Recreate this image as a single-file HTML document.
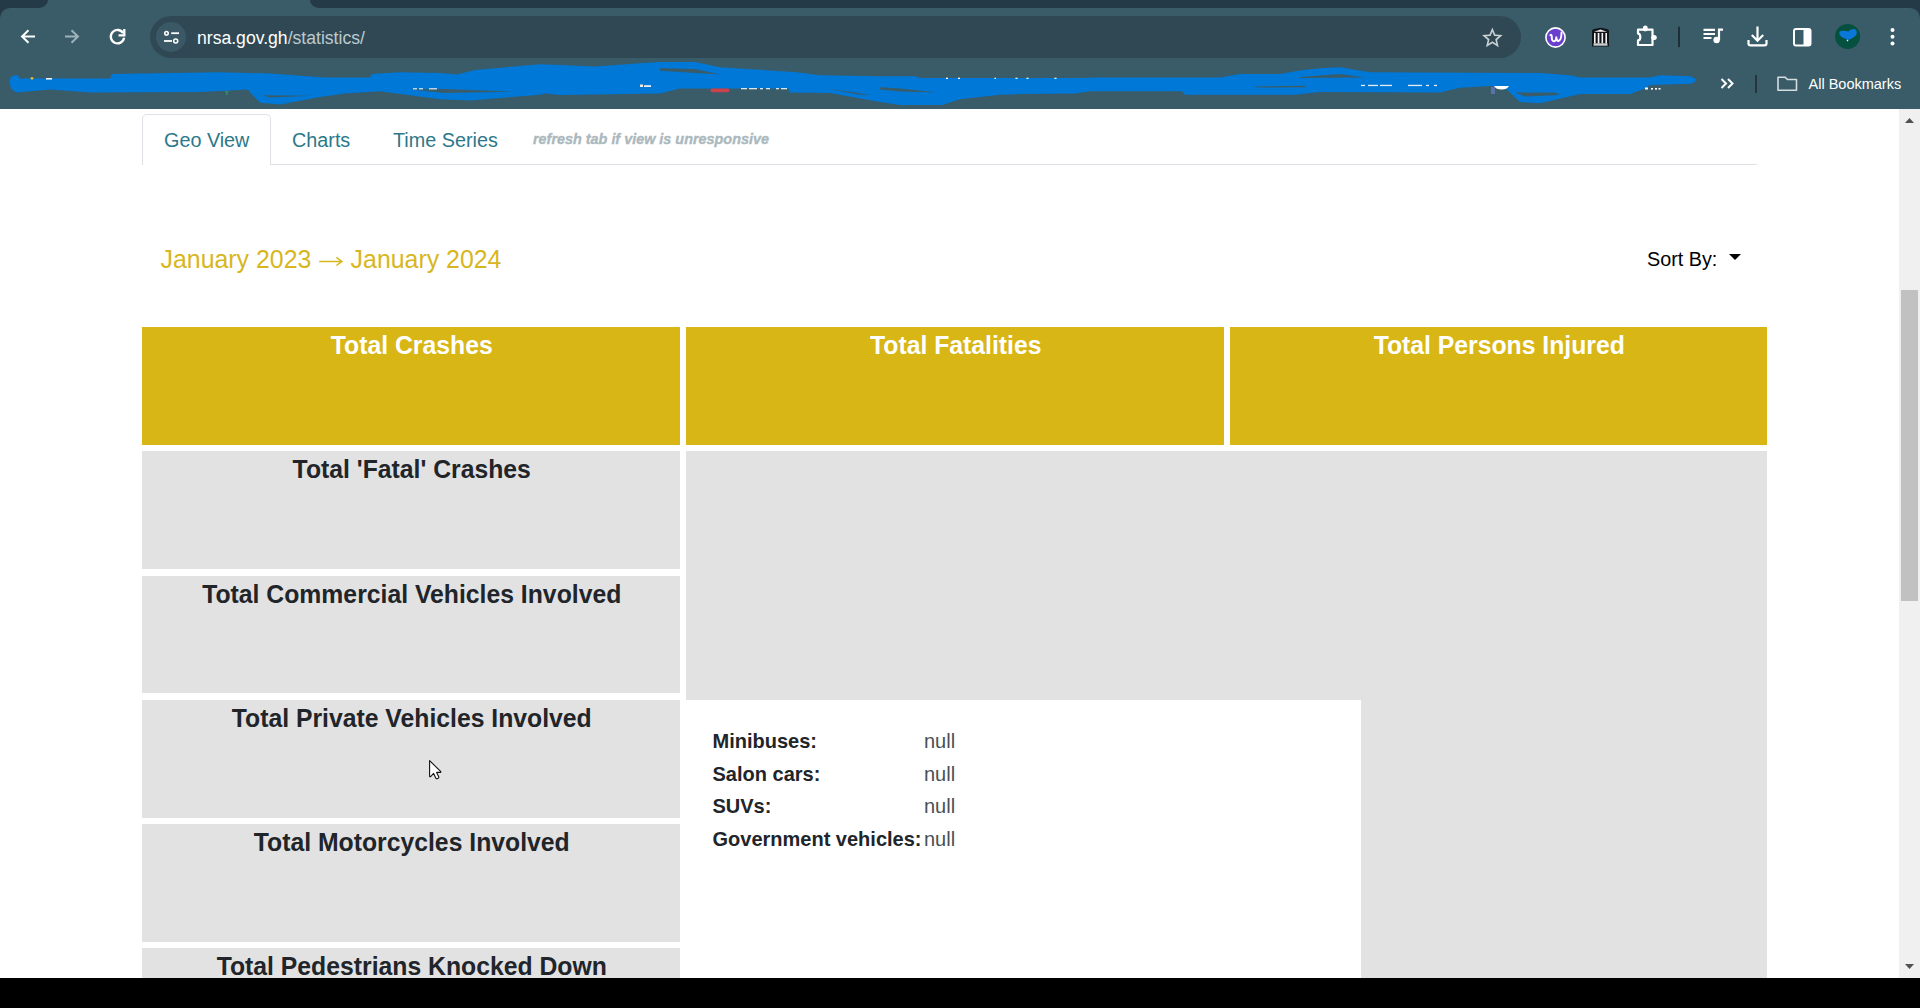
<!DOCTYPE html>
<html><head><meta charset="utf-8">
<style>
*{box-sizing:border-box}
html,body{margin:0;padding:0}
body{width:1920px;height:1008px;position:relative;overflow:hidden;background:#fff;font-family:"Liberation Sans",sans-serif}
.abs{position:absolute}
#topstrip{left:0;top:0;width:1920px;height:30px;background:#243a46}
#acttab{left:38px;top:0;width:284px;height:12px;background:#395c68}
#dl{left:0;top:0;width:48px;height:8px;background:#243a46;border-bottom-right-radius:10px 8px}
#dr{left:310px;top:0;width:1610px;height:8px;background:#243a46;border-bottom-left-radius:10px 8px}
#toolbar{left:0;top:8px;width:1920px;height:101px;background:#395c68;border-radius:10px 10px 0 0}
#omni{left:150px;top:16px;width:1371px;height:42px;background:#304854;border-radius:21px}
#siteinfo{left:156px;top:22px;width:30px;height:30px;border-radius:50%;background:#3a5866}
#url{left:197px;top:26.6px;font-size:17.6px;letter-spacing:0px;color:#fff;white-space:nowrap;line-height:22px}
#url span{color:#bccacf}
#bm{left:1808.5px;top:75px;font-size:14.5px;color:#fff;white-space:nowrap;line-height:18px}
svg{position:absolute;overflow:visible}
.txt{position:absolute;white-space:nowrap;line-height:1;transform:scaleY(1.04);transform-origin:0 84.65%}
.box{position:absolute}
.y{background:#d8b616}
.g{background:#e2e2e3}
.bt{font-weight:700;font-size:24.75px;text-align:center;line-height:1;padding-left:1.5px;transform:scaleY(1.04);transform-origin:50% 84.65%}
.y .bt{color:#fff}
.g .bt{color:#212529}
#sb{left:1899px;top:109px;width:21px;height:869px;background:#f0f0f0}
#thumb{left:1901px;top:290px;width:17px;height:311px;background:#c1c1c1}
#black{left:0;top:978px;width:1920px;height:30px;background:#000}
.lbl{font-weight:700;font-size:20px;color:#212529}
.val{font-size:20px;color:#4a5056}
</style></head><body>
<!-- browser chrome -->
<div id="topstrip" class="abs"></div>
<div id="toolbar" class="abs"></div>
<div id="acttab" class="abs"></div>
<div id="dl" class="abs"></div><div id="dr" class="abs"></div>
<!-- nav icons -->
<svg style="left:0;top:0" width="150" height="60">
  <path d="M35 36.5H22.5M28.5 30.2L22 36.5L28.5 42.8" fill="none" stroke="#fff" stroke-width="2"/>
  <path d="M65 36.5H77.5M71.5 30.2L78 36.5L71.5 42.8" fill="none" stroke="#9fb2b9" stroke-width="2"/>
  <path d="M124.1 37.8A6.7 6.7 0 1 1 123.1 33" fill="none" stroke="#fff" stroke-width="2.3"/>
  <path d="M124.3 29.1V35.3H118.5" fill="none" stroke="#fff" stroke-width="2.3"/>
</svg>
<div id="omni" class="abs"></div>
<div id="siteinfo" class="abs"></div>
<svg style="left:0;top:0" width="200" height="60">
  <circle cx="166.5" cy="33.2" r="1.75" fill="none" stroke="#fff" stroke-width="1.6"/>
  <path d="M171.2 33.2H179" stroke="#fff" stroke-width="1.8"/>
  <circle cx="175.7" cy="41" r="2" fill="none" stroke="#fff" stroke-width="1.6"/>
  <path d="M164 41H172" stroke="#fff" stroke-width="1.8"/>
</svg>
<div id="url" class="abs">nrsa.gov.gh<span>/statistics/</span></div>
<!-- right toolbar icons -->
<svg style="left:0;top:0" width="1920" height="60">
  <g transform="translate(1480 25.5) scale(1.03)"><path d="M22 9.24l-7.19-.62L12 2 9.19 8.63 2 9.24l5.46 4.73L5.82 21 12 17.27 18.18 21l-1.63-7.03L22 9.24zM12 15.4l-3.76 2.27 1-4.28-3.32-2.88 4.38-.38L12 6.1l1.71 4.04 4.38.38-3.32 2.88 1 4.28L12 15.4z" fill="#c8d0d3"/></g>
  <circle cx="1555.5" cy="37.5" r="9.6" fill="#6a3fd0" stroke="#fff" stroke-width="1.6"/>
  <path d="M1550.3 35.2Q1551.5 34 1551.8 36.5Q1551.5 41.5 1554.2 41.3Q1556.3 41 1556.3 36.5Q1556.5 41.3 1558.5 41Q1561.5 40 1561.5 32.5" fill="none" stroke="#fff" stroke-width="1.9" stroke-linecap="round"/>
  <path d="M1592 46.6V31Q1592 29.6 1594 29.1L1600.5 27.8L1607 29.1Q1609 29.6 1609 31V46.6Z" fill="#101418"/><path d="M1594 31.8L1600.5 29.6L1607 31.8Z" fill="#f2f2f2"/><rect x="1594" y="33" width="1.6" height="10.5" fill="#f2f2f2"/><rect x="1597.7" y="33" width="1.7" height="10.5" fill="#f2f2f2"/><rect x="1601.5" y="33" width="1.6" height="10.5" fill="#f2f2f2"/><rect x="1605.4" y="33" width="1.6" height="10.5" fill="#f2f2f2"/><rect x="1593.5" y="43.3" width="14" height="2.4" fill="#c9cccd"/>
  <path d="M1638 29.7H1652.5V45H1638V40.4A2.3 3.4 0 0 0 1638 33.6Z" fill="none" stroke="#fff" stroke-width="2.2" stroke-linejoin="round"/><ellipse cx="1645.3" cy="28.4" rx="2.4" ry="2.8" fill="#fff"/><ellipse cx="1654" cy="37.4" rx="2.8" ry="2.5" fill="#fff"/>
  <path d="M1679 27.5V46.2" stroke="#1d2e36" stroke-width="2" stroke-linecap="round"/>
  <path d="M1703.5 29.9H1715M1703.5 34H1715M1703.5 38H1711.5" stroke="#fff" stroke-width="2.2"/>
  <path d="M1719 40V29.6H1723" fill="none" stroke="#fff" stroke-width="2.2"/>
  <circle cx="1716.6" cy="40" r="3.2" fill="#fff"/>
  <path d="M1757.5 26.6V40.5M1751.8 35L1757.5 40.7L1763.2 35" fill="none" stroke="#fff" stroke-width="2.2"/>
  <path d="M1748.5 40V43.5Q1748.5 45.4 1750.5 45.4H1764.5Q1766.5 45.4 1766.5 43.5V40" fill="none" stroke="#fff" stroke-width="2.2"/>
  <rect x="1794" y="29" width="16.5" height="16.5" rx="2" fill="none" stroke="#fff" stroke-width="2"/>
  <rect x="1803.5" y="29" width="7" height="16.5" fill="#fff"/>
  <circle cx="1847.6" cy="36.4" r="12.5" fill="#06503f"/><path d="M1839.3 33.2Q1839.5 30.8 1843 30.8Q1846.5 30.8 1848.3 31.5Q1850 29 1853.5 29Q1857 29.3 1856.8 33Q1856.3 36.5 1851 38.8L1847.6 40.2L1845.3 38.6Q1840 37 1839.3 33.2Z" fill="#0a78d8"/><circle cx="1847.5" cy="40.6" r="0.8" fill="#e8f4f8"/>
  <circle cx="1892.5" cy="30" r="2" fill="#fff"/>
  <circle cx="1892.5" cy="36.8" r="2" fill="#fff"/>
  <circle cx="1892.5" cy="43.6" r="2" fill="#fff"/>
</svg>
<!-- bookmarks bar -->
<svg style="left:0;top:0" width="1920" height="110">
  <path d="M10 84Q9 78 12 76L17 75L20 78.6L110 78.6L112 74L220 72.3L270 73.5L325 77.5L370 77.5L372 74L400 72.3L440 72.9L457 74.6L475 70L540 64.3L560 64.9L595 66.6L640 63.2L660 62L695 62L720 67.2L755 69.5L797 72.3L820 75.2L880 76.3L915 76.3L920 78L1080 78L1100 77.5L1220 77.5L1240 74L1280 74L1300 70.6L1320 68.3L1340 67.2L1350 68.9L1370 72.3L1540 73L1570 75.2L1580 77.5L1650 77.5L1660 75.2L1690 76.3Q1702 79.8 1690 83.8L1650 85L1645 88.4L1630 94.1L1580 94.1L1540 103.3L1520 102L1505 88L1490 86L1460 87.8L1440 92.4L1320 92L1295 94.7L1185 94.7L1182 91.2L1090 91.2L1075 93.5L1020 94.1L1000 94.7L960 99.3L942 105L900 105L880 102L830 93L790 92.4L788 88.4L680 88.4L660 93.5L560 95L545 93.5L540 94.7L470 100.4L440 99.3L380 91.2L345 93.5L320 97L280 104.4L260 102.7L250 92.4L248 89.5L200 92L90 92.4L50 89.5L17 92.4Q10 90 10 84Z" fill="#0078d7"/><path d="M262 95.2L312 95.8L270 97.6Z" fill="#395c68"/><path d="M410 89.5L445 89L512 91.6L445 93Z" fill="#395c68"/><path d="M660 68.3L695 68.9L720 74.6L660 70.8Z" fill="#395c68"/><path d="M880 87.2L900 88.5L937 92.4L900 91.5L880 89.5Z" fill="#395c68"/><path d="M1252 86.5L1305 85.8L1305 87.2L1260 87.5Z" fill="#395c68"/><path d="M1300 77L1340 74L1365 77.5L1300 78Z" fill="#395c68"/><path d="M1515 92.5L1555 92.5L1560 95L1525 96.4Z" fill="#395c68"/><path d="M828 88.4L872 95L858 94.6Z" fill="#395c68"/>
  <g><rect x="710.5" y="88.6" width="19" height="3.6" rx="1.8" fill="#c9434f"/><rect x="741" y="88" width="6" height="1.3" fill="#dfe6e8"/><rect x="749" y="88" width="8" height="1.3" fill="#dfe6e8"/><rect x="760" y="88" width="3" height="1.3" fill="#dfe6e8"/><rect x="766" y="88" width="4" height="1.3" fill="#dfe6e8"/><rect x="776" y="88" width="3" height="1.3" fill="#dfe6e8"/><rect x="781" y="88" width="6" height="1.3" fill="#dfe6e8"/><rect x="640" y="84.5" width="3" height="2.5" fill="#f3e9dd"/><rect x="644" y="85.2" width="7" height="1.8" fill="#e9eef0"/><rect x="946" y="77.7" width="2" height="1.3" fill="#fff"/><rect x="958" y="77.7" width="2" height="1.3" fill="#fff"/><rect x="994.5" y="77.7" width="1.5" height="1.3" fill="#fff"/><rect x="1015.5" y="77.7" width="2" height="1.3" fill="#fff"/><rect x="1026.5" y="77.7" width="2" height="1.3" fill="#fff"/><rect x="1054.5" y="77.7" width="2" height="1.3" fill="#fff"/><rect x="1361" y="84.8" width="4" height="1.3" fill="#e6ecee"/><rect x="1368" y="84.8" width="10" height="1.3" fill="#e6ecee"/><rect x="1380" y="84.8" width="12" height="1.3" fill="#e6ecee"/><rect x="1408" y="84.8" width="14" height="1.3" fill="#e6ecee"/><rect x="1426" y="84.8" width="3" height="1.3" fill="#e6ecee"/><rect x="1434" y="84.8" width="3" height="1.3" fill="#e6ecee"/><path d="M1494 86H1509Q1507 89.5 1501.5 89.5Q1496 89.5 1494 86Z" fill="#fff"/><rect x="1491" y="87" width="4" height="7" fill="#6b7bbf" opacity="0.7"/><rect x="1645" y="87.5" width="3" height="2" fill="#fff"/><rect x="1651" y="88" width="2" height="1.6" fill="#fff"/><rect x="1655" y="88" width="2" height="1.6" fill="#fff"/><rect x="1658.5" y="88" width="2" height="1.6" fill="#fff"/><circle cx="32" cy="78.3" r="1.4" fill="#e8b830"/><rect x="46" y="78" width="6" height="1.6" fill="#f0f0f0"/><path d="M224.5 91H229L227.5 93V95H226V93Z" fill="#2f8a70"/><rect x="413" y="88.2" width="4" height="1.2" fill="#e6ecee"/><rect x="419" y="88.2" width="4" height="1.2" fill="#e6ecee"/><rect x="429" y="88.2" width="8" height="1.2" fill="#e6ecee"/></g><path d="M1721.5 79L1726 83.5L1721.5 88M1728 79L1732.5 83.5L1728 88" fill="none" stroke="#fff" stroke-width="2"/>
  <path d="M1756 75V93" stroke="#22323a" stroke-width="1.8"/>
  <path d="M1778 77.2H1785L1787.5 79.5H1796.5V90.3H1778Z" fill="none" stroke="#d5dcdf" stroke-width="1.6" stroke-linejoin="round"/>
</svg>
<div id="bm" class="abs">All Bookmarks</div>

<!-- page -->
<div class="abs" style="left:142px;top:164px;width:1615px;height:1px;background:#dee2e6"></div>
<div class="abs" style="left:142px;top:114px;width:129px;height:51px;background:#fff;border:1px solid #dee2e6;border-bottom:0;border-radius:5px 5px 0 0"></div>
<div class="txt" style="left:164px;top:131px;font-size:19.8px;color:#2d7889">Geo View</div>
<div class="txt" style="left:292px;top:131px;font-size:19.8px;color:#2d7889">Charts</div>
<div class="txt" style="left:393px;top:131px;font-size:19.8px;color:#2d7889">Time Series</div>
<div class="txt" style="left:533px;top:132px;font-size:14.4px;font-weight:700;font-style:italic;color:#abb8bd;-webkit-text-stroke:0.35px #abb8bd">refresh tab if view is unresponsive</div>
<div class="txt" style="left:160.5px;top:247.2px;font-size:24.9px;color:#d8b61e">January 2023</div><svg style="left:0;top:0" width="400" height="300"><path d="M319.2 261.4H341.5M336.4 257.3L341.9 261.4L336.4 265.5" fill="none" stroke="#d8b61e" stroke-width="1.5"/></svg><div class="txt" style="left:350.6px;top:247.2px;font-size:24.9px;color:#d8b61e">January 2024</div>
<div class="txt" style="left:1647px;top:249.7px;font-size:19.8px;color:#000">Sort By:</div>
<div class="abs" style="left:1729px;top:254px;width:0;height:0;border-top:6px solid #000;border-left:6px solid transparent;border-right:6px solid transparent"></div>

<div class="box y" style="left:142px;top:327px;width:538px;height:118px"><div class="bt" style="padding-top:7px">Total Crashes</div></div>
<div class="box y" style="left:686px;top:327px;width:538px;height:118px"><div class="bt" style="padding-top:7px">Total Fatalities</div></div>
<div class="box y" style="left:1230px;top:327px;width:537px;height:118px"><div class="bt" style="padding-top:7px">Total Persons Injured</div></div>

<div class="box g" style="left:142px;top:451px;width:538px;height:118px"><div class="bt" style="padding-top:7px">Total 'Fatal' Crashes</div></div>
<div class="box g" style="left:142px;top:576px;width:538px;height:117px"><div class="bt" style="padding-top:7px">Total Commercial Vehicles Involved</div></div>
<div class="box g" style="left:142px;top:700px;width:538px;height:118px"><div class="bt" style="padding-top:7px">Total Private Vehicles Involved</div></div>
<div class="box g" style="left:142px;top:824px;width:538px;height:118px"><div class="bt" style="padding-top:7px">Total Motorcycles Involved</div></div>
<div class="box g" style="left:142px;top:948px;width:538px;height:60px"><div class="bt" style="padding-top:7px">Total Pedestrians Knocked Down</div></div>

<div class="box g" style="left:686px;top:451px;width:1081px;height:557px"></div>
<div class="box" style="left:686px;top:700px;width:675px;height:308px;background:#fff"></div>

<div class="txt lbl" style="left:712.5px;top:731px">Minibuses:</div>
<div class="txt lbl" style="left:712.5px;top:764px">Salon cars:</div>
<div class="txt lbl" style="left:712.5px;top:796px">SUVs:</div>
<div class="txt lbl" style="left:712.5px;top:829px">Government vehicles:</div>
<div class="txt val" style="left:924px;top:731px">null</div>
<div class="txt val" style="left:924px;top:764px">null</div>
<div class="txt val" style="left:924px;top:796px">null</div>
<div class="txt val" style="left:924px;top:829px">null</div>

<!-- cursor -->
<svg style="left:0;top:0" width="1920" height="1008">
  <path d="M429.6 760.6V776.3Q429.8 777 430.6 776.6L433.6 773.4L436 778.4Q436.6 779 437.6 778.6L438.6 778Q439 777.5 438.7 776.8L436.6 772.4H440.6Q441 771.9 440.6 771.4Z" fill="#fff" stroke="#111" stroke-width="1.1" stroke-linejoin="round"/>
</svg>

<!-- scrollbar -->
<div id="sb" class="abs"></div>
<div id="thumb" class="abs"></div>
<svg style="left:0;top:0" width="1920" height="1008">
  <path d="M1905 123H1914L1909.5 118Z" fill="#505050"/>
  <path d="M1905 964H1914L1909.5 969Z" fill="#505050"/>
</svg>
<div id="black" class="abs"></div>
</body></html>
